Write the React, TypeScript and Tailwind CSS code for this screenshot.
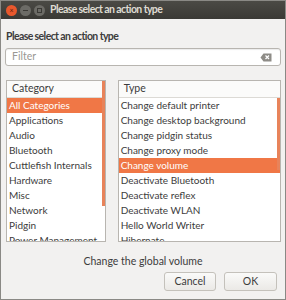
import React from 'react';

const categories = [
  'All Categories',
  'Applications',
  'Audio',
  'Bluetooth',
  'Cuttlefish Internals',
  'Hardware',
  'Misc',
  'Network',
  'Pidgin',
  'Power Management',
];

const types = [
  'Change default printer',
  'Change desktop background',
  'Change pidgin status',
  'Change proxy mode',
  'Change volume',
  'Deactivate Bluetooth',
  'Deactivate reflex',
  'Deactivate WLAN',
  'Hello World Writer',
  'Hibernate',
];

function ListPane({ title, items, selected, thumbTop, thumbHeight, width }: {
  title: string;
  items: string[];
  selected: number;
  thumbTop: string;
  thumbHeight: string;
  width: string;
}) {
  return (
    <div className={`relative h-[162px] overflow-hidden border border-[#b8b5b0] bg-white ${width}`}>
      <div className="flex h-[17px] items-center border-b border-[#dcdad5] bg-[#fbfbfa] px-[5px] text-[10.5px] text-[#3c3c3c]">
        {title}
      </div>
      {items.map((item, i) => (
        <div
          key={item}
          className={`flex h-[15px] items-center whitespace-nowrap px-[2px] text-[10px] ${
            i === selected ? 'bg-[#f07746] text-white' : 'text-[#3c3c3c]'
          }`}
        >
          {item}
        </div>
      ))}
      {/* overlay scrollbar */}
      <div className={`absolute right-0 w-[3px] bg-[#e8835a] ${thumbTop} ${thumbHeight}`} />
    </div>
  );
}

export default function App() {
  return (
    <div
      className="flex h-[300px] w-[286px] flex-col overflow-hidden border border-[#8a8985] bg-[#f2f1f0] text-[#3c3c3c]"
      style={{ fontFamily: 'Lato, "Open Sans", sans-serif' }}
    >
      {/* title bar */}
      <div className="flex h-[18px] shrink-0 items-center gap-[3px] bg-gradient-to-b from-[#4b4a45] to-[#3a3935] px-[5px]">
        <div className="flex h-[11px] w-[11px] items-center justify-center rounded-full bg-[#e9582d] text-[7px] leading-none text-[#5a1a08]">×</div>
        <div className="flex h-[11px] w-[11px] items-center justify-center rounded-full bg-[#6c6b66]">
          <div className="h-[1px] w-[5px] bg-[#3a3935]" />
        </div>
        <div className="flex h-[11px] w-[11px] items-center justify-center rounded-full bg-[#6c6b66]">
          <div className="h-[5px] w-[5px] border border-[#3a3935]" />
        </div>
        <span className="ml-[2px] text-[10.5px] font-bold tracking-[-0.6px] text-[#dfdbd2]">Please select an action type</span>
      </div>

      <div className="flex flex-1 flex-col px-[4px]">
        <div className="mt-[10px] pl-[1px] text-[10.5px] font-bold leading-[14px] tracking-[-0.6px] text-[#3c3c3c]">Please select an action type</div>

        <div className="mt-[5px] flex h-[18px] items-center justify-between rounded-[3px] border border-[#b8b5b0] bg-white pl-[6px] pr-[8px] text-[10.5px] text-[#9a9893] shadow-[inset_0_1px_1px_rgba(0,0,0,0.08)]">
          <span>Filter</span>
          <svg width="12" height="9" viewBox="0 0 12 9">
            <path d="M3.5 0.5 H11.5 V8.5 H3.5 L0.5 4.5 Z" fill="#8e8c87" />
            <path d="M5.5 2.5 L9 6 M9 2.5 L5.5 6" stroke="#fff" strokeWidth="1.2" />
          </svg>
        </div>

        <div className="mt-[14px] flex gap-[12px] pl-[1px]">
          <ListPane
            title="Category"
            items={categories}
            selected={0}
            thumbTop="top-0"
            thumbHeight="h-[125px]"
            width="w-[100px]"
          />
          <ListPane
            title="Type"
            items={types}
            selected={4}
            thumbTop="top-[17px]"
            thumbHeight="h-[72px]"
            width="w-[164px]"
          />
        </div>

        <div className="mt-[12px] text-center text-[10.5px] leading-[14px] text-[#3c3c3c]">Change the global volume</div>

        <div className="mt-[4px] flex justify-end gap-[8px] pr-[4px]">
          <button className="h-[19px] w-[52px] rounded-[3px] border border-[#c4c1bb] bg-gradient-to-b from-[#fafaf9] to-[#ebe9e6] text-[10.5px] text-[#3c3c3c]">
            Cancel
          </button>
          <button className="h-[19px] w-[53px] rounded-[3px] border border-[#c4c1bb] bg-gradient-to-b from-[#fafaf9] to-[#ebe9e6] text-[10.5px] text-[#3c3c3c]">
            OK
          </button>
        </div>
      </div>
    </div>
  );
}
